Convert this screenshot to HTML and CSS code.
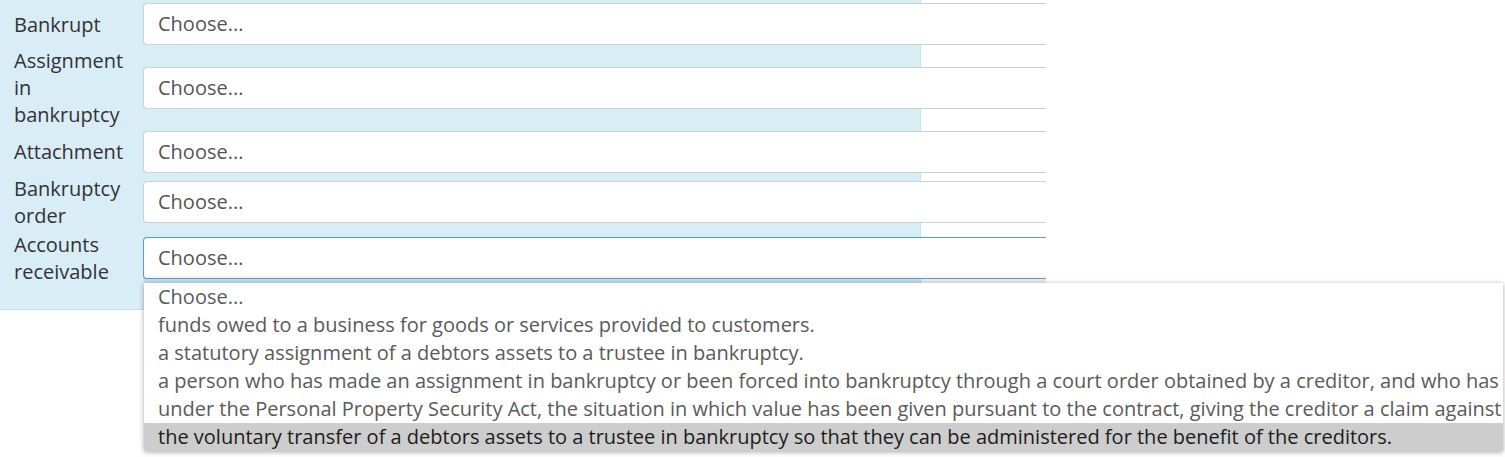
FILE: index.html
```html
<!DOCTYPE html>
<html>
<head>
<meta charset="utf-8">
<link rel="stylesheet" href="styles.css">
</head>
<body>
<div class="panel">
  <div class="row">
    <div class="label">Bankrupt</div>
    <div class="field"><div class="select">Choose...</div></div>
  </div>
  <div class="row">
    <div class="label">Assignment in bankruptcy</div>
    <div class="field"><div class="select">Choose...</div></div>
  </div>
  <div class="row">
    <div class="label">Attachment</div>
    <div class="field"><div class="select">Choose...</div></div>
  </div>
  <div class="row">
    <div class="label">Bankruptcy order</div>
    <div class="field"><div class="select">Choose...</div></div>
  </div>
  <div class="row">
    <div class="label">Accounts receivable</div>
    <div class="field">
      <div class="select focused">Choose...</div>
      <ul class="options">
        <li>Choose...</li>
        <li>funds owed to a business for goods or services provided to customers.</li>
        <li>a statutory assignment of a debtors assets to a trustee in bankruptcy.</li>
        <li>a person who has made an assignment in bankruptcy or been forced into bankruptcy through a court order obtained by a creditor, and who has</li>
        <li>under the Personal Property Security Act, the situation in which value has been given pursuant to the contract, giving the creditor a claim against</li>
        <li class="active">the voluntary transfer of a debtors assets to a trustee in bankruptcy so that they can be administered for the benefit of the creditors.</li>
      </ul>
    </div>
  </div>
</div>
</body>
</html>
```
FILE: styles.css
```css
html, body {
  margin: 0;
  padding: 0;
  background: #fff;
}
body {
  font-family: "Open Sans", "DejaVu Sans", sans-serif;
  font-size: 20px;
  color: #333;
  min-height: 457px;
}
.panel {
  box-sizing: border-box;
  width: 921px;
  background: #d9edf7;
  border-right: 1px solid #bce8f1;
  border-bottom: 1px solid #bce8f1;
  padding: 3px 0 24px 14px;
  display: flex;
  flex-direction: column;
  gap: 2.25px;
}
.row {
  display: flex;
  align-items: center;
}
.label {
  flex: 0 0 122px;
  margin-right: 7px;
  line-height: 27px;
  color: #333;
}
.field {
  position: relative;
  flex: 0 0 903px;
  width: 903px;
}
.select {
  box-sizing: border-box;
  height: 42px;
  background: #fff;
  border: 1px solid #d0d0d0;
  border-right: none;
  border-radius: 4px 0 0 4px;
  padding-left: 14px;
  line-height: 40px;
  color: #555;
}
.select.focused {
  border-color: #4f9de0;
  box-shadow: inset 0 -7px 6px -5px rgba(0,0,0,0.06), 0 4px 0 rgba(0,0,0,0.08);
}
.options {
  position: absolute;
  left: 1px;
  top: 46px;
  width: 1359px;
  margin: 0;
  padding: 0;
  list-style: none;
  background: #fff;
  box-shadow: 0 1px 5px rgba(0,0,0,0.35);
  z-index: 2;
}
.options li {
  height: 28px;
  line-height: 28px;
  padding-left: 14px;
  white-space: nowrap;
  overflow: hidden;
  color: #5a5a5a;
}
.options li.active {
  background: #cdcdcd;
  color: #1c1c1c;
}
```
